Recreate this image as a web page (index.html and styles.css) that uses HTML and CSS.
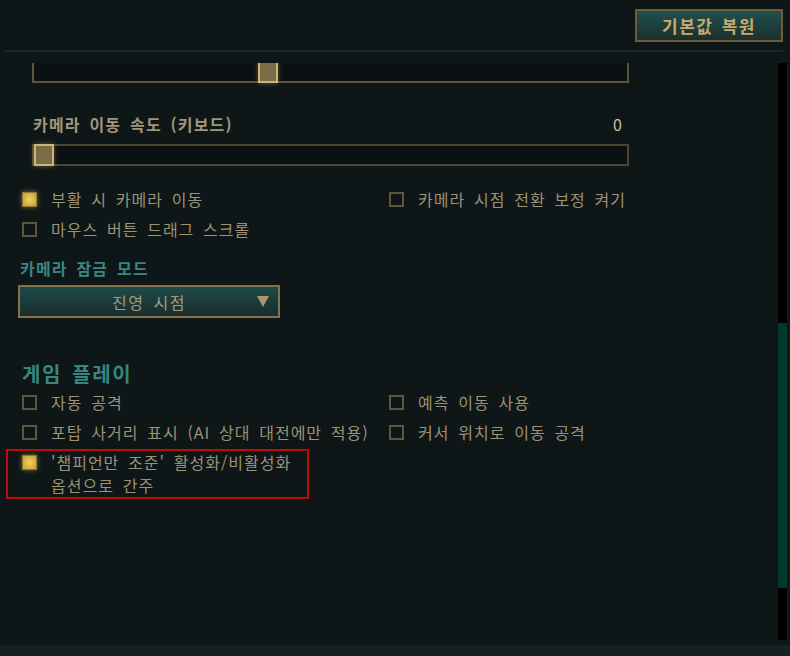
FILE: index.html
```html
<!DOCTYPE html>
<html lang="ko">
<head>
  <meta charset="UTF-8">
  <title>설정</title>
  <link rel="stylesheet" href="styles.css">
</head>
<body>

  <div class="header">
    <button class="reset">기본값 복원</button>
  </div>
  <div class="divider"></div>

  <div class="panel">
    <div class="viewport">
      <div class="content">

        <!-- 위쪽 슬라이더 (스크롤로 잘림) -->
        <div class="slider bright">
          <div class="thumb" style="margin-left: 224px"></div>
        </div>

        <div class="slider-label">
          <span>카메라 이동 속도 (키보드)</span>
          <span class="value">0</span>
        </div>
        <div class="slider">
          <div class="thumb" style="margin-left: 0px"></div>
        </div>

        <div class="options first">
          <label class="option"><span class="box checked"></span>부활 시 카메라 이동</label>
          <label class="option"><span class="box"></span>카메라 시점 전환 보정 켜기</label>
          <label class="option"><span class="box"></span>마우스 버튼 드래그 스크롤</label>
        </div>

        <h3 class="sub">카메라 잠금 모드</h3>
        <div class="dropdown">
          <span>진영 시점</span>
          <span class="arrow"></span>
        </div>

        <h2 class="section">게임 플레이</h2>
        <div class="options">
          <label class="option"><span class="box"></span>자동 공격</label>
          <label class="option"><span class="box"></span>예측 이동 사용</label>
          <label class="option"><span class="box"></span>포탑 사거리 표시 (AI 상대 대전에만 적용)</label>
          <label class="option"><span class="box"></span>커서 위치로 이동 공격</label>
        </div>

        <div class="marked">
          <label class="option tall"><span class="box checked"></span>'챔피언만 조준' 활성화/비활성화<br>옵션으로 간주</label>
        </div>

      </div>
    </div>
    <div class="scrollbar">
      <div class="scroll-thumb"></div>
    </div>
  </div>

  <div class="footer"></div>

</body>
</html>
```

FILE: styles.css
```css
body {
  margin: 0;
  width: 790px;
  height: 656px;
  overflow: hidden;
  background-color: #0e1618;
  font-family: "Noto Sans CJK KR", "Liberation Sans", sans-serif;
  color: #9d9274;
}

.header {
  height: 50px;
  display: flex;
  justify-content: flex-end;
  align-items: flex-start;
  padding: 9px 7px 0 0;
  box-sizing: border-box;
}

.reset {
  width: 148px;
  height: 33px;
  border: 2px solid #6e5c38;
  background: linear-gradient(#21504c, #1a302e);
  color: #c8aa6e;
  font-family: inherit;
  font-size: 17px;
  font-weight: bold;
  letter-spacing: 1.5px;
  word-spacing: 2px;
  padding: 0;
  cursor: pointer;
}

.divider {
  height: 2px;
  margin: 0 7px 0 5px;
  background-color: #172629;
}

.panel {
  display: flex;
  margin-top: 11px;
  height: 582px;
}

.viewport {
  flex: 1;
  overflow: hidden;
}

.content {
  margin-top: -2px;
  padding-left: 18px;
}

.slider {
  width: 597px;
  height: 22px;
  margin-left: 14px;
  box-sizing: border-box;
  border: 2px solid #4b4531;
  background-color: #0b1012;
  display: flex;
}

.slider.bright {
  border-color: #5d5538;
}

.thumb {
  width: 20px;
  height: 22px;
  margin-top: -2px;
  margin-left: -2px;
  box-sizing: border-box;
  border: 2px solid #c9b678;
  background-color: #7a6d45;
  box-shadow: 0 0 5px rgba(200, 180, 100, 0.45);
}

.slider-label {
  width: 597px;
  margin: 31px 0 0 15px;
  display: flex;
  justify-content: space-between;
  line-height: 20px;
  font-size: 16px;
  font-weight: bold;
  letter-spacing: 1.2px;
  word-spacing: 3px;
  color: #a2977a;
}

.slider-label .value {
  font-weight: normal;
  color: #c9c1a0;
  margin-right: 7px;
}

.slider-label + .slider {
  margin-top: 10px;
}

.options {
  display: grid;
  grid-template-columns: 367px 1fr;
  padding-left: 4px;
}

.options.first {
  margin-top: 18px;
}

.option {
  display: flex;
  align-items: center;
  height: 30px;
  font-size: 16px;
  letter-spacing: 1px;
  word-spacing: 3.3px;
  white-space: nowrap;
}

.box {
  width: 15px;
  height: 15px;
  box-sizing: border-box;
  border: 2px solid #5f563d;
  margin-right: 14px;
  flex-shrink: 0;
}

.box.checked {
  border: 1px solid #8e7738;
  background: radial-gradient(#f2d35c, #c39d32);
  box-shadow: 0 0 5px rgba(220, 180, 70, 0.55);
}

.sub {
  margin: 14px 0 0 2px;
  line-height: 20px;
  font-size: 16px;
  font-weight: bold;
  letter-spacing: 1.2px;
  word-spacing: 3px;
  color: #3a8782;
}

.dropdown {
  width: 262px;
  height: 33px;
  margin-top: 7px;
  box-sizing: border-box;
  border: 2px solid #85714b;
  background: linear-gradient(#1f4a48, #172e2d);
  display: flex;
  align-items: center;
  justify-content: center;
  position: relative;
  font-size: 16px;
  letter-spacing: 1.5px;
  word-spacing: 3px;
  color: #a89b7a;
}

.arrow {
  position: absolute;
  right: 9px;
  top: 9px;
  border-left: 6.5px solid transparent;
  border-right: 6.5px solid transparent;
  border-top: 11px solid #a89670;
}

.section {
  margin: 43px 0 0 4px;
  line-height: 26px;
  font-size: 20px;
  font-weight: bold;
  letter-spacing: 1.6px;
  word-spacing: 3px;
  color: #358681;
}

.marked {
  width: 303px;
  margin: 2px 0 0 -12px;
  box-sizing: border-box;
  border: 2px solid #c10a0a;
  padding: 0 0 0 14px;
}

.option.tall {
  height: auto;
  align-items: flex-start;
  line-height: 23px;
  white-space: normal;
}

.option.tall .box {
  margin-top: 4px;
}

.scrollbar {
  width: 9px;
  height: 577px;
  margin-right: 3px;
  background-color: #000;
  padding-top: 260px;
  box-sizing: border-box;
}

.scroll-thumb {
  height: 265px;
  background-color: #00382f;
}

.footer {
  height: 11px;
  background-color: #152120;
  border-bottom: 1px solid #5a4d2e;
}
```
